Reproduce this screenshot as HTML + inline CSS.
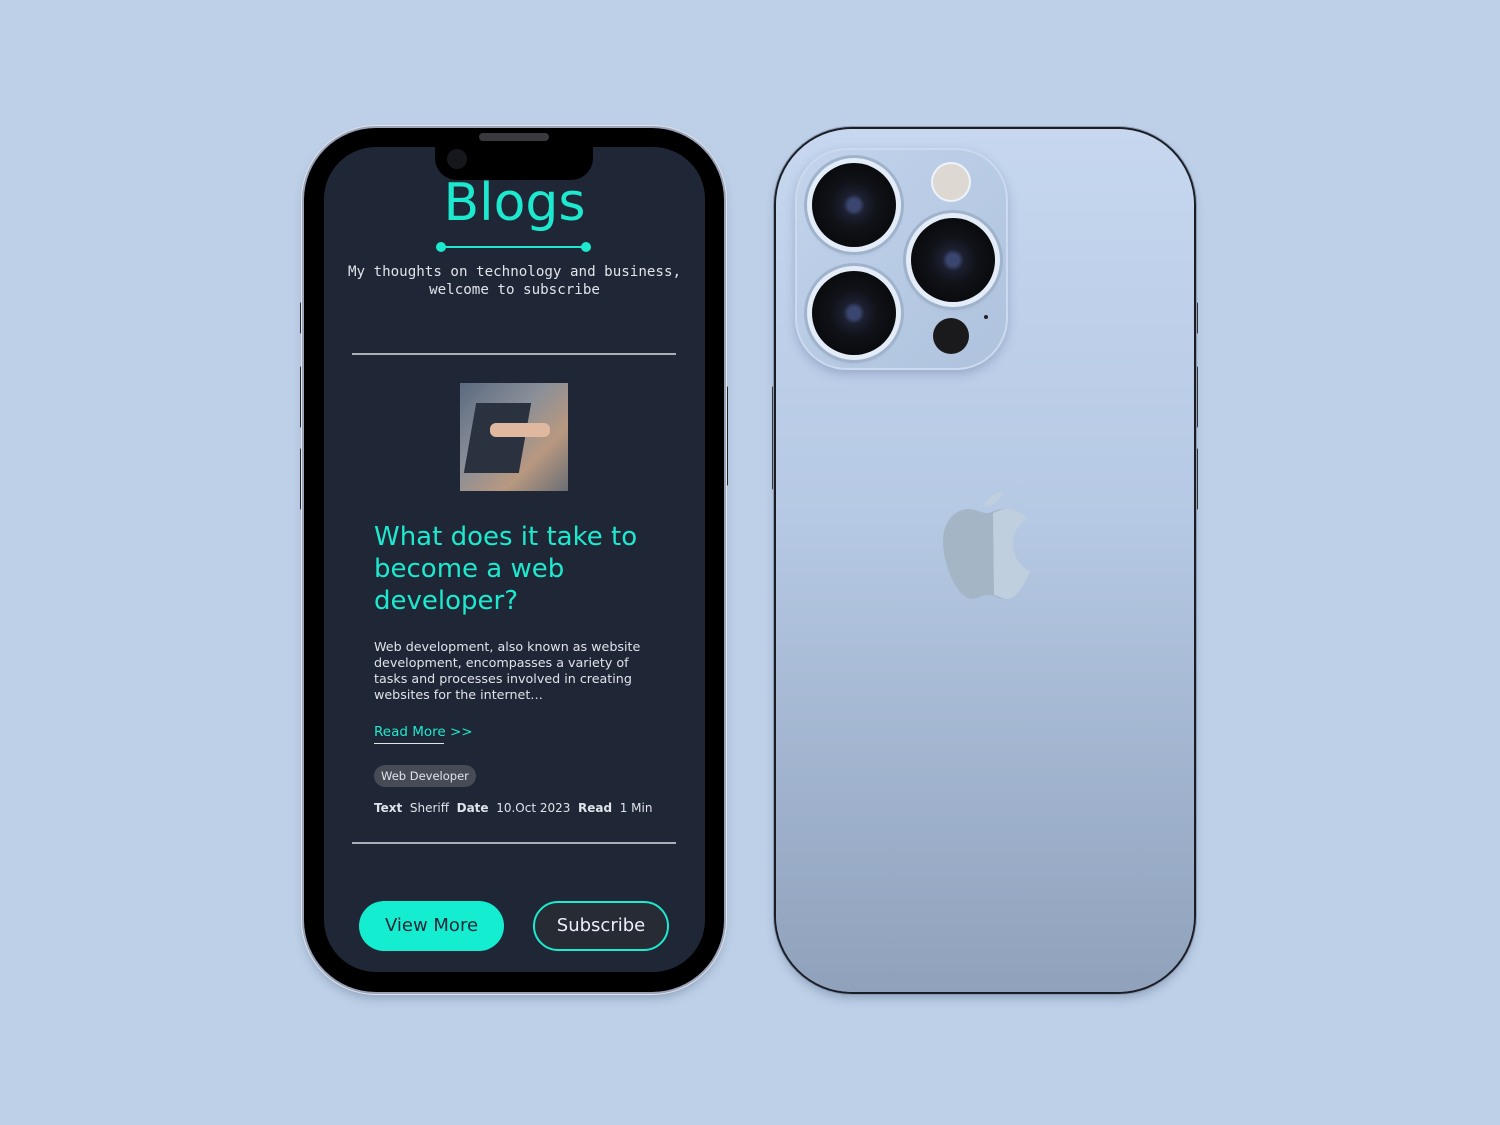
<!DOCTYPE html>
<html><head><style>
body{margin:0;width:1500px;height:1125px;background:#bdd0e8;position:relative;overflow:hidden;font-family:"DejaVu Sans","Liberation Sans",sans-serif}
.abs{position:absolute}
.lp{left:304px;top:128px;width:420px;height:864px;border-radius:72px;background:#000;box-shadow:0 0 0 2px #9aa3b8,0 0 0 3px #dfe4ee,0 6px 10px rgba(60,80,110,.35)}
.scr{left:324px;top:147px;width:381px;height:825px;border-radius:52px;background:#1f2736;overflow:hidden}
.notch{left:435px;top:140px;width:158px;height:40px;background:#000;border-radius:0 0 22px 22px}
.mono{font-family:"DejaVu Sans Mono","Liberation Mono",monospace}
.rp{left:776px;top:129px;width:418px;height:863px;border-radius:76px;background:linear-gradient(180deg,#c6d7ef 0%,#b6c9e4 45%,#8fa1bb 100%);box-shadow:0 0 0 2px #1a1d24,0 0 0 3px #8b9ab5,0 6px 10px rgba(60,80,110,.35);overflow:hidden}
.lens{border-radius:50%;background:radial-gradient(circle,#3a4670 0 10%,#1c2030 18%,#101218 40%,#0a0b0e 70%);box-shadow:0 0 0 5px #e3ecf7,0 0 0 8px #9fb3cd,0 4px 8px rgba(0,0,0,.3)}
</style></head><body>
<div class="abs" style="left:300px;top:302px;width:4px;height:32px;background:#222;border-radius:2px"></div>
<div class="abs" style="left:300px;top:366px;width:4px;height:62px;background:#222;border-radius:2px"></div>
<div class="abs" style="left:300px;top:448px;width:4px;height:62px;background:#222;border-radius:2px"></div>
<div class="abs" style="left:724px;top:386px;width:4px;height:100px;background:#222;border-radius:2px"></div>
<div class="abs lp"></div>
<div class="abs scr">
  <div class="abs" style="left:0;width:381px;top:26px;text-align:center;color:#1de9cf;font-size:52px;font-family:'DejaVu Sans',sans-serif">Blogs</div>
  <div class="abs" style="left:117px;top:99px;width:145px;height:2px;background:#1de9cf"></div>
  <div class="abs" style="left:112px;top:95px;width:10px;height:10px;border-radius:50%;background:#1de9cf"></div>
  <div class="abs" style="left:257px;top:95px;width:10px;height:10px;border-radius:50%;background:#1de9cf"></div>
  <div class="abs mono" style="left:-10px;width:401px;top:116px;text-align:center;color:#e0e4ea;font-size:14.2px;line-height:18px;white-space:nowrap">My thoughts on technology and business,<br>welcome to subscribe</div>
  <div class="abs" style="left:28px;top:206px;width:324px;height:2px;background:#aab0ba"></div>
  <div class="abs" style="left:136px;top:236px;width:108px;height:108px;background:linear-gradient(135deg,#5b6a80,#8a8f98 40%,#b89880 70%,#6a6e74)"><div style="position:absolute;left:10px;top:20px;width:55px;height:70px;background:#2a3240;transform:skewX(-10deg)"></div><div style="position:absolute;left:30px;top:40px;width:60px;height:14px;background:#e0b8a0;border-radius:6px"></div></div>
  <div class="abs" style="left:50px;top:374px;width:300px;color:#1de9cf;font-size:26px;line-height:32px">What does it take to become a web developer?</div>
  <div class="abs" style="left:50px;top:492px;width:290px;color:#e0e4ea;font-size:12.7px;line-height:16px">Web development, also known as website development, encompasses a variety of tasks and processes involved in creating websites for the internet…</div>
  <div class="abs" style="left:50px;top:577px;color:#1de9cf;font-size:13.5px">Read More &gt;&gt;</div>
  <div class="abs" style="left:50px;top:596px;width:70px;height:1px;background:#e0e4ea"></div>
  <div class="abs" style="left:50px;top:618px;height:22px;padding:0 7px;border-radius:11px;background:#474b55;color:#e0e4ea;font-size:11.5px;line-height:22px">Web Developer</div>
  <div class="abs" style="left:50px;top:654px;color:#e0e4ea;font-size:12px;white-space:nowrap"><b>Text</b> &nbsp;Sheriff &nbsp;<b>Date</b> &nbsp;10.Oct 2023 &nbsp;<b>Read</b> &nbsp;1 Min</div>
  <div class="abs" style="left:28px;top:695px;width:324px;height:2px;background:#aab0ba"></div>
  <div class="abs" style="left:35px;top:754px;width:145px;height:50px;border-radius:25px;background:#14edd0;color:#1f2736;font-size:18px;line-height:50px;text-align:center">View More</div>
  <div class="abs" style="left:209px;top:754px;width:132px;height:46px;border-radius:25px;border:2px solid #1de9cf;background:#272b33;color:#eef;font-size:18px;line-height:46px;text-align:center">Subscribe</div>
</div>
<div class="abs notch"></div>
<div class="abs" style="left:479px;top:133px;width:70px;height:8px;border-radius:4px;background:#3a3a3e"></div>
<div class="abs" style="left:447px;top:149px;width:20px;height:20px;border-radius:50%;background:#15171c"></div>

<div class="abs" style="left:772px;top:386px;width:4px;height:104px;background:#333;border-radius:2px"></div>
<div class="abs" style="left:1194px;top:302px;width:4px;height:32px;background:#333;border-radius:2px"></div>
<div class="abs" style="left:1194px;top:366px;width:4px;height:62px;background:#333;border-radius:2px"></div>
<div class="abs" style="left:1194px;top:448px;width:4px;height:62px;background:#333;border-radius:2px"></div>
<div class="abs rp">
  <div class="abs" style="left:19px;top:19px;width:213px;height:222px;border-radius:52px;background:linear-gradient(135deg,#c3d4ec,#aec2dd);box-shadow:inset 0 0 0 2px #cbdaee,0 4px 10px rgba(70,90,130,.3)"></div>
  <div class="abs lens" style="left:36px;top:34px;width:84px;height:84px"></div>
  <div class="abs lens" style="left:135px;top:89px;width:84px;height:84px"></div>
  <div class="abs lens" style="left:36px;top:142px;width:84px;height:84px"></div>
  <div class="abs" style="left:157px;top:35px;width:36px;height:36px;border-radius:50%;background:#ddd8d2;box-shadow:0 0 0 2px #eef3fa"></div>
  <div class="abs" style="left:157px;top:189px;width:36px;height:36px;border-radius:50%;background:#1a1a1c"></div>
  <div class="abs" style="left:208px;top:186px;width:4px;height:4px;border-radius:50%;background:#222"></div>
  <svg class="abs" style="left:165px;top:360px" width="92" height="112" viewBox="0 0 92 112"><path d="M62 2c-8 1-17 7-19 16 9 0 17-7 19-16z M46 24c-6 0-12-4-18-4C14 20 2 32 2 52c0 25 15 58 29 58 6 0 9-4 16-4s9 4 16 4c9 0 18-15 23-28-12-5-17-17-17-28 0-11 6-19 14-24-6-8-15-10-21-10-7 0-11 4-16 4z" fill="#a4b5c6"/><path d="M62 2c-8 1-17 7-19 16 9 0 17-7 19-16z M52 24c5-2 9-4 13-4 6 0 15 2 21 10-8 5-14 13-14 24 0 11 5 23 17 28-5 13-14 28-23 28-5 0-8-3-13-4z" fill="#c0cfdd"/></svg>
</div>
</body></html>
